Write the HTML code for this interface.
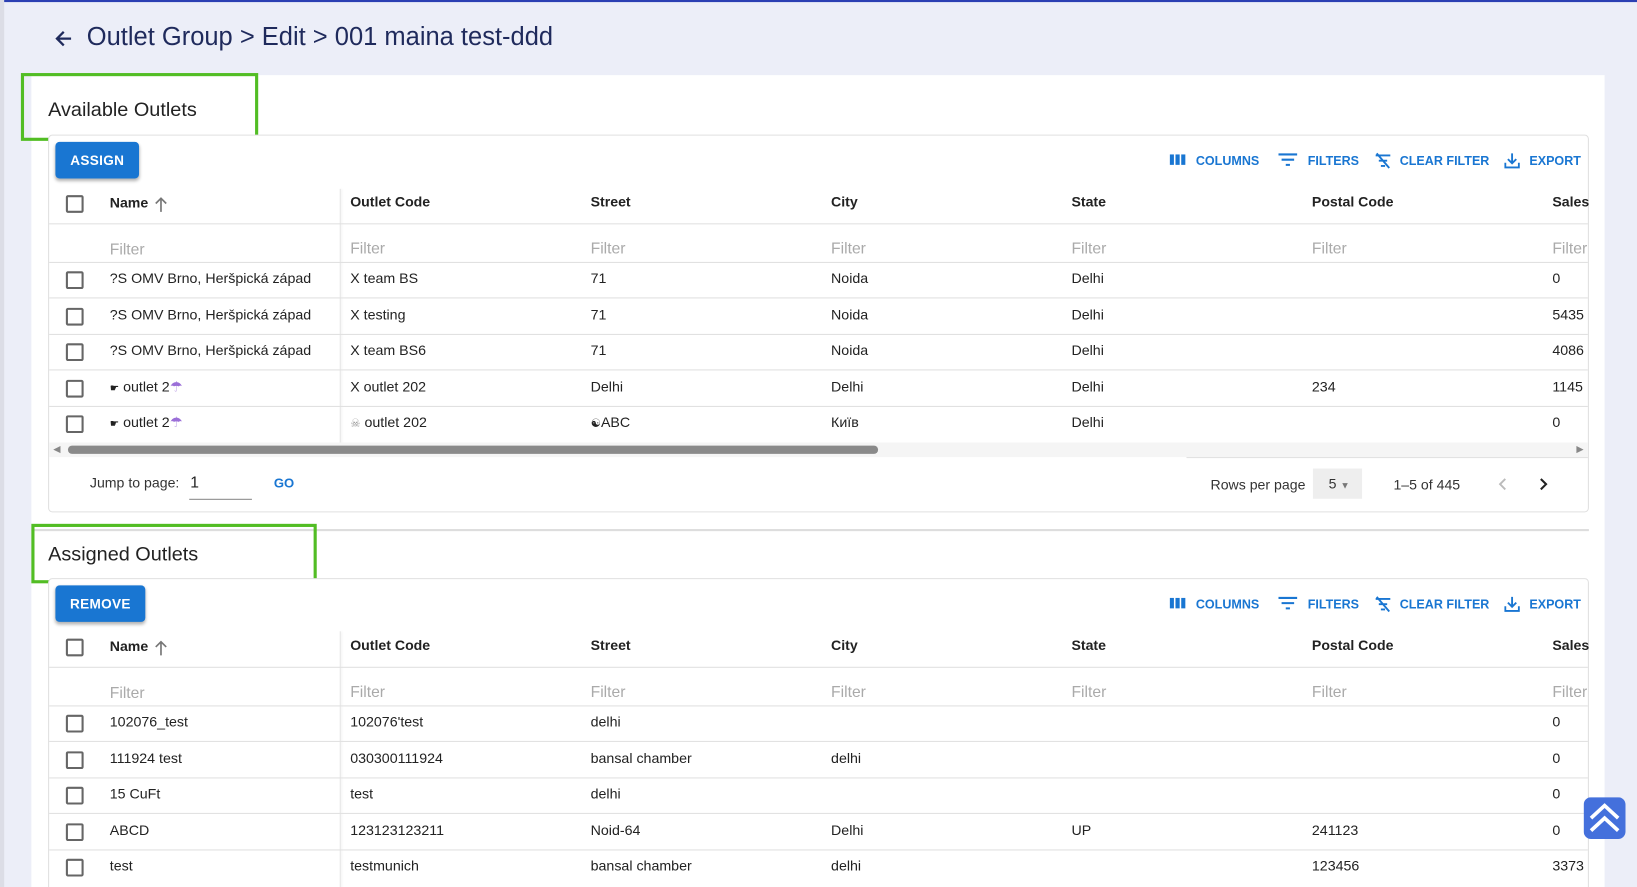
<!DOCTYPE html>
<html><head><meta charset="utf-8">
<style>
*{box-sizing:border-box;margin:0;padding:0}
html,body{width:1637px;height:887px;overflow:hidden;background:#eceef8;font-family:"Liberation Sans","DejaVu Sans",sans-serif}
#w{position:absolute;left:0;top:0;width:1566px;height:850px;overflow:hidden;transform:scale(1.04534,1.0435);transform-origin:0 0}
.a{position:absolute;white-space:nowrap}
.card{position:absolute;left:30px;top:72px;width:1505px;height:778px;background:#fff}
.green{position:absolute;border:3px solid #52bd24}
.sec{font-size:19px;color:#222}
.tb{position:absolute;left:46px;width:1474px;border:1px solid #e0e0e0;border-radius:4px;background:#fff}
.btn{position:absolute;left:6px;top:6px;height:35px;background:#1976d2;color:#fff;font-weight:bold;font-size:13px;border-radius:4px;box-shadow:0 2px 3px rgba(0,0,0,.3);line-height:35px;text-align:center;letter-spacing:.3px}
.tool{position:absolute;top:17px;font-size:12px;color:#1976d2;font-weight:bold}
.tool svg{position:absolute;top:-1px}
.hd{font-size:13.5px;font-weight:bold;color:#222}
.cb{position:absolute;left:16px;width:17px;height:17px;border:2px solid #666;border-radius:2px}
.flt{font-size:15px;color:#aaa}
.cell{font-size:13.6px;color:#222}
.hl{position:absolute;left:0;right:0;height:1px;background:#e0e0e0}
.vs{position:absolute;left:278px;width:1px;background:#e6e6e6;box-shadow:1px 0 2px rgba(0,0,0,.08)}
.arr{position:absolute;left:100px;top:58px}
</style></head><body><div id="w">
<div style="position:absolute;left:0;top:0;width:1566px;height:2px;background:#2b3fb3"></div>
<div style="position:absolute;left:0;top:0;width:4px;height:850px;background:#dcdde6"></div>
<svg class="a" style="left:51px;top:27px" width="20" height="20" viewBox="0 0 20 20"><path d="M17 10H4M10 3.5L3.5 10 10 16.5" fill="none" stroke="#1f2a5c" stroke-width="2.2"/></svg>
<div class="a" style="left:83px;top:22px;font-size:24.4px;color:#1f2a5c;font-weight:500">Outlet Group &gt; Edit &gt; 001 maina test-ddd</div>
<div class="card"></div>
<div class="green" style="left:20px;top:70px;width:227px;height:65px"></div>
<div class="a sec" style="left:46px;top:95px">Available Outlets</div>
<div style="position:absolute;left:30px;top:507px;width:1490px;height:2px;background:#ddd"></div>
<div class="green" style="left:30px;top:502px;width:273px;height:57px"></div>
<div class="a sec" style="left:46px;top:521px">Assigned Outlets</div>

<!-- TABLE 1 -->
<div class="tb" style="top:129px;height:362px">
 <div class="btn" style="width:80px">ASSIGN</div>
 <div class="tool" style="left:1072px"><svg style="left:0" width="15" height="14"><rect x="0" y="2" width="4" height="10" fill="#1976d2"/><rect x="5.5" y="2" width="4" height="10" fill="#1976d2"/><rect x="11" y="2" width="4" height="10" fill="#1976d2"/></svg><span style="margin-left:25px">COLUMNS</span></div>
 <div class="tool" style="left:1176px"><svg style="left:0" width="18" height="14"><path d="M0 2h18M3 7h12M7 12h4" stroke="#1976d2" stroke-width="2"/></svg><span style="margin-left:28px">FILTERS</span></div>
 <div class="tool" style="left:1268px"><svg style="left:0" width="16" height="16"><path d="M1 3h14M4 8h8M6 13h4M2 1l12 14" stroke="#1976d2" stroke-width="1.8"/></svg><span style="margin-left:24px">CLEAR FILTER</span></div>
 <div class="tool" style="left:1392px"><svg style="left:0" width="15" height="16"><path d="M7.5 1v9M3.5 6.5l4 4 4-4M1 10v4.5h13V10" fill="none" stroke="#1976d2" stroke-width="1.8"/></svg><span style="margin-left:24px">EXPORT</span></div>
 <div class="vs" style="top:51px;height:245px"></div>
 <div class="cb" style="top:57px"></div>
 <div class="a hd" style="left:58px;top:57px">Name</div>
 <svg class="arr" width="14" height="16"><path d="M7 15V2M2 7l5-5 5 5" fill="none" stroke="#777" stroke-width="1.6"/></svg>
 <div class="a hd" style="left:288px;top:56px">Outlet Code</div>
 <div class="a hd" style="left:518px;top:56px">Street</div>
 <div class="a hd" style="left:748px;top:56px">City</div>
 <div class="a hd" style="left:978px;top:56px">State</div>
 <div class="a hd" style="left:1208px;top:56px">Postal Code</div>
 <div class="a hd" style="left:1438px;top:56px">Sales</div>
 <div class="hl" style="top:84px"></div>
 <div class="a flt" style="left:58px;top:101px">Filter</div><div class="a flt" style="left:288px;top:100px">Filter</div><div class="a flt" style="left:518px;top:100px">Filter</div><div class="a flt" style="left:748px;top:100px">Filter</div><div class="a flt" style="left:978px;top:100px">Filter</div><div class="a flt" style="left:1208px;top:100px">Filter</div><div class="a flt" style="left:1438px;top:100px">Filter</div>
 <div class="hl" style="top:121px"></div>
 <div class="cb" style="top:130px"></div><div class="a cell" style="left:58px;top:129px">?S OMV Brno, Heršpická západ</div><div class="a cell" style="left:288px;top:129px">X team BS</div><div class="a cell" style="left:518px;top:129px">71</div><div class="a cell" style="left:748px;top:129px">Noida</div><div class="a cell" style="left:978px;top:129px">Delhi</div><div class="a cell" style="left:1438px;top:129px">0</div>
 <div class="hl" style="top:155px"></div>
 <div class="cb" style="top:165px"></div><div class="a cell" style="left:58px;top:164px">?S OMV Brno, Heršpická západ</div><div class="a cell" style="left:288px;top:164px">X testing</div><div class="a cell" style="left:518px;top:164px">71</div><div class="a cell" style="left:748px;top:164px">Noida</div><div class="a cell" style="left:978px;top:164px">Delhi</div><div class="a cell" style="left:1438px;top:164px">5435</div>
 <div class="hl" style="top:190px"></div>
 <div class="cb" style="top:199px"></div><div class="a cell" style="left:58px;top:198px">?S OMV Brno, Heršpická západ</div><div class="a cell" style="left:288px;top:198px">X team BS6</div><div class="a cell" style="left:518px;top:198px">71</div><div class="a cell" style="left:748px;top:198px">Noida</div><div class="a cell" style="left:978px;top:198px">Delhi</div><div class="a cell" style="left:1438px;top:198px">4086</div>
 <div class="hl" style="top:224px"></div>
 <div class="cb" style="top:234px"></div><div class="a cell" style="left:58px;top:233px"><span style="font-size:10px">☛</span> outlet 2<span style="color:#9b6fd8">☂</span></div><div class="a cell" style="left:288px;top:233px">X outlet 202</div><div class="a cell" style="left:518px;top:233px">Delhi</div><div class="a cell" style="left:748px;top:233px">Delhi</div><div class="a cell" style="left:978px;top:233px">Delhi</div><div class="a cell" style="left:1208px;top:233px">234</div><div class="a cell" style="left:1438px;top:233px">1145</div>
 <div class="hl" style="top:259px"></div>
 <div class="cb" style="top:268px"></div><div class="a cell" style="left:58px;top:267px"><span style="font-size:10px">☛</span> outlet 2<span style="color:#9b6fd8">☂</span></div><div class="a cell" style="left:288px;top:267px"><span style="color:#999;font-size:11px">☠</span> outlet 202</div><div class="a cell" style="left:518px;top:267px"><span style="font-size:11px">☯</span>ABC</div><div class="a cell" style="left:748px;top:267px">Київ</div><div class="a cell" style="left:978px;top:267px">Delhi</div><div class="a cell" style="left:1438px;top:267px">0</div>
 <div style="position:absolute;left:0;top:294px;width:1472px;height:14px;background:#f5f5f5"></div>
 <div style="position:absolute;left:18px;top:297px;width:775px;height:8px;background:#8a8a8a;border-radius:4px"></div>
 <div class="a" style="left:4px;top:295px;font-size:9px;color:#888">◀</div>
 <div class="a" style="left:1461px;top:295px;font-size:9px;color:#888">▶</div>
 <div class="hl" style="top:308px;left:1088px"></div>
 <div class="a" style="left:39px;top:325px;font-size:13.5px;color:#333">Jump to page:</div>
 <div class="a" style="left:135px;top:324px;font-size:15px;color:#222">1</div>
 <div style="position:absolute;left:134px;top:348px;width:60px;height:1px;background:#888"></div>
 <div class="a" style="left:215px;top:326px;font-size:12.5px;color:#1976d2;font-weight:bold">GO</div>
 <div class="a" style="left:1111px;top:327px;font-size:13.5px;color:#333">Rows per page</div>
 <div style="position:absolute;left:1209px;top:319px;width:47px;height:29px;background:#eee"></div>
 <div class="a" style="left:1224px;top:326px;font-size:13.5px;color:#333">5 <span style="font-size:9px;color:#777">▼</span></div>
 <div class="a" style="left:1286px;top:327px;font-size:13.5px;color:#333">1–5 of 445</div>
 <svg class="a" style="left:1386px;top:327px" width="10" height="14"><path d="M7 2L2 7l5 5" fill="none" stroke="#bbb" stroke-width="1.8"/></svg>
 <svg class="a" style="left:1424px;top:327px" width="10" height="14"><path d="M3 2l5 5-5 5" fill="none" stroke="#222" stroke-width="2"/></svg>
</div>

<!-- TABLE 2 -->
<div class="tb" style="top:554px;height:300px">
 <div class="btn" style="width:86px">REMOVE</div>
 <div class="tool" style="left:1072px"><svg style="left:0" width="15" height="14"><rect x="0" y="2" width="4" height="10" fill="#1976d2"/><rect x="5.5" y="2" width="4" height="10" fill="#1976d2"/><rect x="11" y="2" width="4" height="10" fill="#1976d2"/></svg><span style="margin-left:25px">COLUMNS</span></div>
 <div class="tool" style="left:1176px"><svg style="left:0" width="18" height="14"><path d="M0 2h18M3 7h12M7 12h4" stroke="#1976d2" stroke-width="2"/></svg><span style="margin-left:28px">FILTERS</span></div>
 <div class="tool" style="left:1268px"><svg style="left:0" width="16" height="16"><path d="M1 3h14M4 8h8M6 13h4M2 1l12 14" stroke="#1976d2" stroke-width="1.8"/></svg><span style="margin-left:24px">CLEAR FILTER</span></div>
 <div class="tool" style="left:1392px"><svg style="left:0" width="15" height="16"><path d="M7.5 1v9M3.5 6.5l4 4 4-4M1 10v4.5h13V10" fill="none" stroke="#1976d2" stroke-width="1.8"/></svg><span style="margin-left:24px">EXPORT</span></div>
 <div class="vs" style="top:50px;height:270px"></div>
 <div class="cb" style="top:57px"></div>
 <div class="a hd" style="left:58px;top:57px">Name</div>
 <svg class="arr" width="14" height="16"><path d="M7 15V2M2 7l5-5 5 5" fill="none" stroke="#777" stroke-width="1.6"/></svg>
 <div class="a hd" style="left:288px;top:56px">Outlet Code</div>
 <div class="a hd" style="left:518px;top:56px">Street</div>
 <div class="a hd" style="left:748px;top:56px">City</div>
 <div class="a hd" style="left:978px;top:56px">State</div>
 <div class="a hd" style="left:1208px;top:56px">Postal Code</div>
 <div class="a hd" style="left:1438px;top:56px">Sales</div>
 <div class="hl" style="top:84px"></div>
 <div class="a flt" style="left:58px;top:101px">Filter</div><div class="a flt" style="left:288px;top:100px">Filter</div><div class="a flt" style="left:518px;top:100px">Filter</div><div class="a flt" style="left:748px;top:100px">Filter</div><div class="a flt" style="left:978px;top:100px">Filter</div><div class="a flt" style="left:1208px;top:100px">Filter</div><div class="a flt" style="left:1438px;top:100px">Filter</div>
 <div class="hl" style="top:121px"></div>
 <div class="cb" style="top:130px"></div><div class="a cell" style="left:58px;top:129px">102076_test</div><div class="a cell" style="left:288px;top:129px">102076'test</div><div class="a cell" style="left:518px;top:129px">delhi</div><div class="a cell" style="left:1438px;top:129px">0</div>
 <div class="hl" style="top:155px"></div>
 <div class="cb" style="top:165px"></div><div class="a cell" style="left:58px;top:164px">111924 test</div><div class="a cell" style="left:288px;top:164px">030300111924</div><div class="a cell" style="left:518px;top:164px">bansal chamber</div><div class="a cell" style="left:748px;top:164px">delhi</div><div class="a cell" style="left:1438px;top:164px">0</div>
 <div class="hl" style="top:190px"></div>
 <div class="cb" style="top:199px"></div><div class="a cell" style="left:58px;top:198px">15 CuFt</div><div class="a cell" style="left:288px;top:198px">test</div><div class="a cell" style="left:518px;top:198px">delhi</div><div class="a cell" style="left:1438px;top:198px">0</div>
 <div class="hl" style="top:224px"></div>
 <div class="cb" style="top:234px"></div><div class="a cell" style="left:58px;top:233px">ABCD</div><div class="a cell" style="left:288px;top:233px">123123123211</div><div class="a cell" style="left:518px;top:233px">Noid-64</div><div class="a cell" style="left:748px;top:233px">Delhi</div><div class="a cell" style="left:978px;top:233px">UP</div><div class="a cell" style="left:1208px;top:233px">241123</div><div class="a cell" style="left:1438px;top:233px">0</div>
 <div class="hl" style="top:259px"></div>
 <div class="cb" style="top:268px"></div><div class="a cell" style="left:58px;top:267px">test</div><div class="a cell" style="left:288px;top:267px">testmunich</div><div class="a cell" style="left:518px;top:267px">bansal chamber</div><div class="a cell" style="left:748px;top:267px">delhi</div><div class="a cell" style="left:1208px;top:267px">123456</div><div class="a cell" style="left:1438px;top:267px">3373</div>
</div>

<svg class="a" style="left:1515px;top:764px" width="40" height="40" viewBox="0 0 40 40"><rect width="40" height="40" rx="7" fill="#4470dc"/><path d="M7 20L20 8 33 20M7 32L20 20 33 32" fill="none" stroke="#fff" stroke-width="3.5"/></svg>
</div></body></html>
